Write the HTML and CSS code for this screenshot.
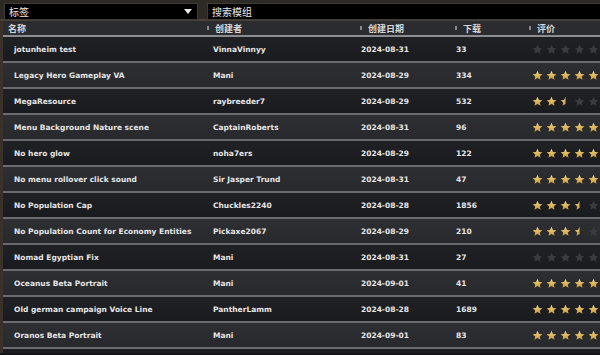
FILE: index.html
```html
<!DOCTYPE html>
<html lang="zh">
<head>
  <meta charset="UTF-8">
  <title>模组</title>
  <link rel="stylesheet" href="styles.css">
</head>
<body>
  <svg width="0" height="0" class="defs">
    <defs>
      <linearGradient id="gold" x1="0" y1="0" x2="0" y2="1">
        <stop offset="0" stop-color="#f6dc8a"/>
        <stop offset="1" stop-color="#c9962f"/>
      </linearGradient>
      <symbol id="star" viewBox="0 0 24 24">
        <path d="M12 1.5l3.2 7 7.3.7-5.5 4.9 1.6 7.4L12 17.7l-6.6 3.8 1.6-7.4L1.5 9.2l7.3-.7z"/>
      </symbol>
      <clipPath id="halfclip"><rect x="0" y="0" width="12" height="24"/></clipPath>
    </defs>
  </svg>

  <div class="topbar">
    <div class="select">标签<span class="arrow"></span></div>
    <div class="search">搜索模组</div>
  </div>

  <div class="panel">
    <div class="row head">
      <div class="c name">名称</div>
      <div class="c"><i class="sort"></i>创建者</div>
      <div class="c"><i class="sort"></i>创建日期</div>
      <div class="c"><i class="sort"></i>下载</div>
      <div class="c"><i class="sort"></i>评价</div>
    </div>
    <div id="lista"></div>
  </div>

  <script>
    const mods = [
      ["jotunheim test", "VinnaVinnyy", "2024-08-31", "33", 0],
      ["Legacy Hero Gameplay VA", "Mani", "2024-08-29", "334", 5],
      ["MegaResource", "raybreeder7", "2024-08-29", "532", 2.5],
      ["Menu Background Nature scene", "CaptainRoberts", "2024-08-31", "96", 5],
      ["No hero glow", "noha7ers", "2024-08-29", "122", 5],
      ["No menu rollover click sound", "Sir Jasper Trund", "2024-08-31", "47", 5],
      ["No Population Cap", "Chuckles2240", "2024-08-28", "1856", 3.5],
      ["No Population Count for Economy Entities", "Pickaxe2067", "2024-08-29", "210", 3.5],
      ["Nomad Egyptian Fix", "Mani", "2024-08-31", "27", 0],
      ["Oceanus Beta Portrait", "Mani", "2024-09-01", "41", 5],
      ["Old german campaign Voice Line", "PantherLamm", "2024-08-28", "1689", 5],
      ["Oranos Beta Portrait", "Mani", "2024-09-01", "83", 5]
    ];

    function estrellas(valor) {
      let html = "";
      for (let i = 1; i <= 5; i++) {
        if (valor >= i) {
          html += '<svg class="star on"><use href="#star"/></svg>';
        } else if (valor >= i - 0.5) {
          html += '<svg class="star half" viewBox="0 0 24 24"><g clip-path="url(#halfclip)"><use href="#star" width="24" height="24"/></g></svg>';
        } else {
          html += '<svg class="star off"><use href="#star"/></svg>';
        }
      }
      return html;
    }

    document.getElementById("lista").innerHTML = mods.map(m => `
      <div class="row item">
        <div class="c name">${m[0]}</div>
        <div class="c">${m[1]}</div>
        <div class="c date">${m[2]}</div>
        <div class="c num">${m[3]}</div>
        <div class="c stars">${estrellas(m[4])}</div>
      </div>`).join('');
  </script>
</body>
</html>
```

FILE: styles.css
```css
body {
  margin: 0;
  width: 600px;
  height: 355px;
  overflow: hidden;
  background: #151517;
  font-family: "DejaVu Sans", "Noto Sans CJK SC", sans-serif;
  color: #e6e6e6;
}
.defs {
  position: absolute;
}
.topbar {
  height: 21px;
  background: #2d2a25;
  border-bottom: 2px solid #4b4134;
  display: flex;
  gap: 9px;
  padding: 3px 0 0 4px;
  box-sizing: border-box;
}
.select, .search {
  height: 15px;
  background: #000;
  border: 1px solid #3e3a34;
  font-family: "Noto Sans CJK SC", sans-serif;
  font-size: 10px;
  line-height: 15px;
  padding-left: 4px;
  color: #e8e8e8;
  box-sizing: content-box;
}
.select {
  width: 188px;
  position: relative;
}
.arrow {
  position: absolute;
  right: 5px;
  top: 5px;
  border-left: 4px solid transparent;
  border-right: 4px solid transparent;
  border-top: 5px solid #e8e8e8;
}
.search {
  flex: 1;
  border-right: none;
}
.panel {
  border-left: 3px solid #3a3128;
  height: 332px;
  background: #1b1c1f;
}
.row {
  display: grid;
  grid-template-columns: 202px 153px 95px 74px 1fr;
  align-items: center;
}
.head {
  height: 14px;
  background: #2b2c30;
  border-bottom: 2px solid #8c8d90;
  font-family: "Noto Sans CJK SC", sans-serif;
  font-size: 9px;
  font-weight: bold;
  color: #d8d8d8;
}
.head .c {
  display: flex;
  align-items: center;
  padding-left: 2px;
}
.head .name {
  padding-left: 5px;
}
.sort {
  width: 2px;
  height: 4px;
  background: #8a8a8a;
  margin-right: 6px;
}
.item {
  height: 24px;
  border-bottom: 2px solid #6a6b6f;
  font-size: 7.5px;
  font-weight: bold;
  background: linear-gradient(#2e2f33, #28292d);
}
.item:nth-child(odd) {
  background: linear-gradient(#202124, #1a1b1e);
}
.item .c {
  padding-left: 8px;
  white-space: nowrap;
}
.item .name {
  padding-left: 11px;
}
.item .date,
.item .num {
  padding-left: 3px;
}
.item .stars {
  padding-left: 5px;
  display: flex;
  gap: 3px;
}
.star {
  width: 11px;
  height: 11px;
}
.star.on, .star.half {
  fill: url(#gold);
}
.star.off {
  fill: #3b3c40;
}
```
